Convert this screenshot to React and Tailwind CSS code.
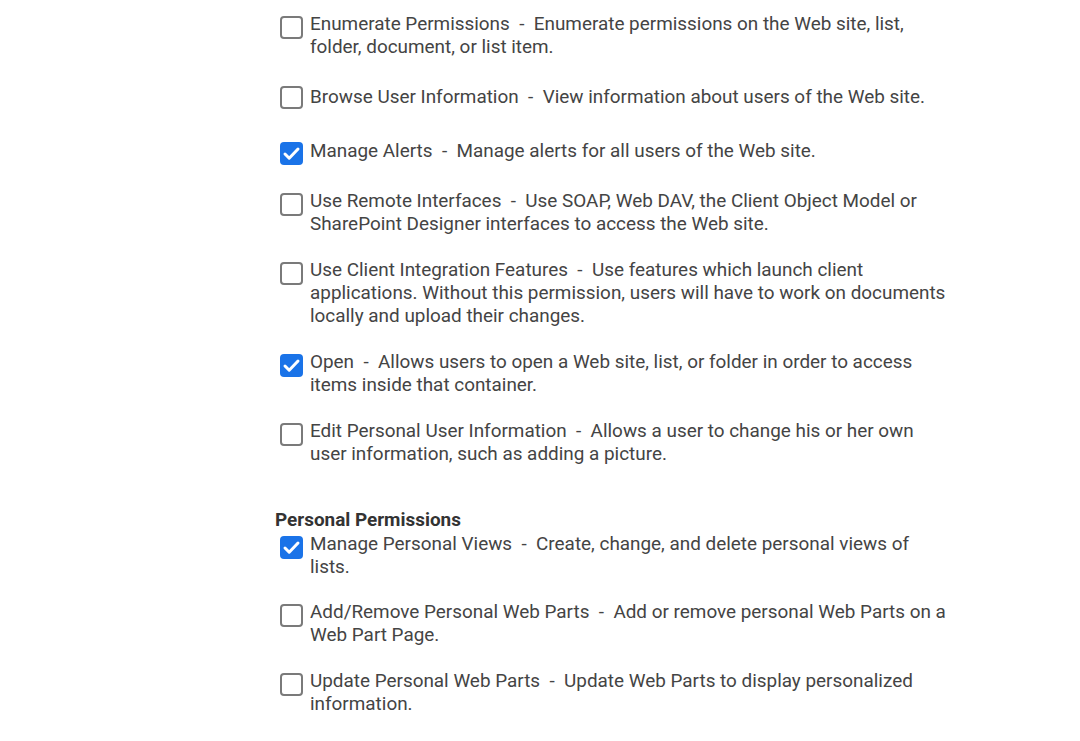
import React from 'react';

const siteItems = [
  {
    name: 'Enumerate Permissions',
    desc: 'Enumerate permissions on the Web site, list, folder, document, or list item.',
    checked: false,
    gap: 'mt-[12px]',
  },
  {
    name: 'Browse User Information',
    desc: 'View information about users of the Web site.',
    checked: false,
    gap: 'mt-[27px]',
    box: 'mt-[1px]',
  },
  {
    name: 'Manage Alerts',
    desc: 'Manage alerts for all users of the Web site.',
    checked: true,
    gap: 'mt-[30px]',
    box: 'mt-[3px]',
  },
  {
    name: 'Use Remote Interfaces',
    desc: 'Use SOAP, Web DAV, the Client Object Model or SharePoint Designer interfaces to access the Web site.',
    checked: false,
    gap: 'mt-[24px]',
  },
  {
    name: 'Use Client Integration Features',
    desc: 'Use features which launch client applications. Without this permission, users will have to work on documents locally and upload their changes.',
    checked: false,
    gap: 'mt-[23px]',
  },
  {
    name: 'Open',
    desc: 'Allows users to open a Web site, list, or folder in order to access items inside that container.',
    checked: true,
    gap: 'mt-[23px]',
  },
  {
    name: 'Edit Personal User Information',
    desc: 'Allows a user to change his or her own user information, such as adding a picture.',
    checked: false,
    gap: 'mt-[23px]',
  },
];

const personalItems = [
  {
    name: 'Manage Personal Views',
    desc: 'Create, change, and delete personal views of lists.',
    checked: true,
    gap: 'mt-[2px]',
  },
  {
    name: 'Add/Remove Personal Web Parts',
    desc: 'Add or remove personal Web Parts on a Web Part Page.',
    checked: false,
    gap: 'mt-[22px]',
  },
  {
    name: 'Update Personal Web Parts',
    desc: 'Update Web Parts to display personalized information.',
    checked: false,
    gap: 'mt-[23px]',
  },
];

const CheckBox = ({ checked, className }) => {
  if (checked) {
    return (
      <span className={`flex h-[23px] w-[23px] shrink-0 items-center justify-center rounded-[4px] bg-[#1a73e8] ${className}`}>
        <svg width="19" height="19" viewBox="0 0 19 19" fill="none">
          <path d="M3 10l4.2 4.2L16 5" stroke="white" strokeWidth="3" strokeLinecap="round" strokeLinejoin="round" />
        </svg>
      </span>
    );
  }
  return (
    <span className={`block h-[23px] w-[23px] shrink-0 rounded-[4px] border-2 border-[#7a7a7a] bg-white ${className}`} />
  );
};

const PermissionRow = ({ item }) => (
  <div className={`flex items-start gap-[7px] pl-[5px] ${item.gap}`}>
    <CheckBox checked={item.checked} className={item.box || 'mt-[4px]'} />
    <div className="w-[640px] text-[18.9px] leading-[23px] text-[#444444]">
      {item.name}
      {'\u00a0\u00a0-\u00a0\u00a0'}
      {item.desc}
    </div>
  </div>
);

export default function App() {
  return (
    <div
      className="min-h-[741px] w-[1080px] bg-white pl-[275px]"
      style={{ fontFamily: 'Roboto, "Liberation Sans", sans-serif' }}
    >
      <div className="flex flex-col">
        {siteItems.map((item) => (
          <PermissionRow key={item.name} item={item} />
        ))}
      </div>

      <h3 className="mt-[45px] text-[18.9px] font-bold leading-[20px] text-[#333333]">
        Personal Permissions
      </h3>
      <div className="flex flex-col">
        {personalItems.map((item) => (
          <PermissionRow key={item.name} item={item} />
        ))}
      </div>
    </div>
  );
}
